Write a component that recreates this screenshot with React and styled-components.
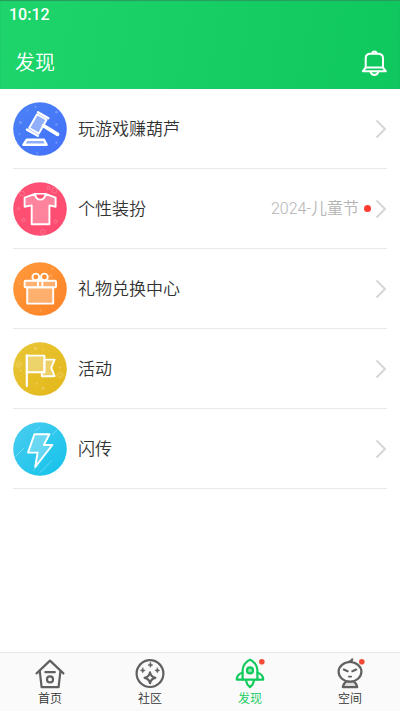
import styled, { createGlobalStyle } from "styled-components";

const GlobalStyle = createGlobalStyle`
    * {
        box-sizing: border-box;
    }
    body {
        margin: 0;
        background: #ffffff;
        font-family: Roboto, "Noto Sans CJK SC", sans-serif;
        font-weight: 350;
    }
`

const Page = styled.div`
    display: flex;
    flex-direction: column;
    min-height: 100vh;
`

const Header = styled.header`
    padding: 0 12px 0 15px;
    color: #ffffff;
    background: linear-gradient(100deg, #1dd56b 0%, #0fc85d 100%);
    box-shadow: inset 0 1px 1px #2c9a5c;
`

const StatusBar = styled.div`
    display: flex;
    align-items: center;
    height: 28px;
    margin-left: -6px;
    font-size: 16px;
    font-weight: 500;
`

const TitleBar = styled.div`
    display: flex;
    align-items: center;
    justify-content: space-between;
    height: 61px;
    padding-top: 8px;
`

const Title = styled.h1`
    margin: 0;
    font-size: 20px;
    line-height: 28px;
    font-weight: 350;
`

const BellButton = styled.button`
    display: flex;
    padding: 0;
    border: none;
    background: none;
    color: inherit;
    cursor: pointer;
`

const List = styled.main`
    flex: 1;
    padding: 0 13px;
`

const Row = styled.a`
    display: flex;
    align-items: center;
    height: 80px;
    border-bottom: 1px solid #e9e9e9;
    color: #333333;
    text-decoration: none;
`

const RowTitle = styled.span`
    flex: 1;
    margin-left: 11px;
    font-size: 17px;
    line-height: 24px;
`

const RowNote = styled.span`
    margin-right: 5px;
    color: #b4b4b4;
    font-size: 16px;
    line-height: 24px;
`

const Dot = styled.span`
    width: 7px;
    height: 7px;
    margin-right: 4px;
    border-radius: 50%;
    background: #ff3b2f;
`

const TabBar = styled.nav`
    position: sticky;
    bottom: 0;
    display: flex;
    height: 59px;
    border-top: 1px solid #e6e6e6;
    background: #fafafa;
`

const Tab = styled.a`
    flex: 1;
    display: flex;
    flex-direction: column;
    align-items: center;
    padding-top: 5px;
    color: ${props => props.$active ? "#0ecb5b" : "#606060"};
    text-decoration: none;
`

const TabLabel = styled.span`
    color: ${props => props.$active ? "#0ecb5b" : "#333333"};
    font-size: 12px;
    line-height: 18px;
`

const Bell = () => (
    <svg width="28" height="28" viewBox="0 0 28 28" fill="none" stroke="currentColor" strokeWidth="2" strokeLinejoin="round" strokeLinecap="round" aria-hidden="true">
        <path d="M5.7 18.6V9.3Q5.7 4.8 10.4 4.8H18Q23 4.8 23 9.3V18.6L25.8 22.2H2.9Z" />
        <path d="M5.7 18.6H23" />
        <path d="M12.3 4.3Q12.5 2.4 14.4 2.4T16.5 4.3" />
        <path d="M10.4 22.6Q11.5 26 14.4 26T18.4 22.6" />
    </svg>
)

const Chevron = () => (
    <svg width="12" height="20" viewBox="0 0 12 20" fill="none" stroke="#d6d6d6" strokeWidth="2" aria-hidden="true">
        <path d="M1.5 1.5L10 10L1.5 18.5" />
    </svg>
)

// round badge, each row passes its own gradient and drawing
const Badge = ({ id, from, to, children }) => (
    <svg width="54" height="54" viewBox="0 0 54 54" fill="none" aria-hidden="true">
        <defs>
            <linearGradient id={id} x1="0" y1="0" x2="1" y2="1">
                <stop offset="0" stopColor={from} />
                <stop offset="1" stopColor={to} />
            </linearGradient>
        </defs>
        <circle cx="27" cy="27" r="26.8" fill={`url(#${id})`} />
        {children}
    </svg>
)

const Gavel = () => (
    <Badge id="gavel" from="#4a82f5" to="#4470fa">
        <g fill="#ffffff" fillOpacity="0.22">
            <circle cx="7.5" cy="20.5" r="1.6" />
            <circle cx="43.5" cy="10" r="1.5" />
            <circle cx="43.5" cy="22.5" r="1.2" />
            <circle cx="22.5" cy="5" r="1" />
            <circle cx="6.5" cy="32" r="1" />
            <circle cx="43.5" cy="40.5" r="1.2" />
            <circle cx="24.5" cy="51" r="1" />
            <circle cx="14.5" cy="8.5" r="0.8" />
        </g>
        <g stroke="#ffffff" strokeWidth="1.9" strokeLinejoin="round">
            <path d="M24 12.2L33.6 17.8L25.8 31.6L16.2 26Z" fill="#ffffff" fillOpacity="0.4" />
            <path d="M25 10.2L35.4 16.2M14 27.6L24.8 33.8" strokeWidth="2.4" strokeLinecap="round" />
            <path d="M30.4 23.6L44.6 32.4" strokeWidth="3.6" strokeLinecap="round" />
            <path d="M13.6 37.8H31L33.6 42.8H10.4Z" fill="#ffffff" fillOpacity="0.4" strokeWidth="2.4" />
        </g>
    </Badge>
)

const Shirt = () => (
    <Badge id="shirt" from="#ff5275" to="#fd4b70">
        <g stroke="#ffffff" strokeOpacity="0.2">
            <circle cx="9" cy="11.5" r="2.4" />
            <circle cx="41.5" cy="8.5" r="2.6" />
            <circle cx="35.5" cy="5.8" r="1.4" />
            <circle cx="30" cy="50" r="2.4" />
            <circle cx="10.5" cy="38" r="1.5" />
            <circle cx="42.5" cy="39.5" r="1.6" />
            <circle cx="5.5" cy="26.5" r="1" />
        </g>
        <path d="M22 11.8L11.6 15.6V24.8L18.7 23.4V42.2H36.4V23.4L42.6 24.8V15.6L32.6 11.8Q31.6 17.6 27.3 17.6T22 11.8Z" fill="#ffffff" fillOpacity="0.3" stroke="#ffffff" strokeWidth="1.9" strokeLinejoin="round" />
        <path d="M21.6 11.8H33" stroke="#ffffff" strokeWidth="1.6" />
    </Badge>
)

const Gift = () => (
    <Badge id="gift" from="#ff9a3d" to="#fd8326">
        <g fill="#ffffff" fillOpacity="0.22">
            <circle cx="39.5" cy="7" r="1" />
            <circle cx="6.5" cy="21.5" r="0.9" />
            <circle cx="27.5" cy="48.5" r="0.9" />
            <circle cx="46" cy="34" r="0.8" />
            <path d="M35.5 14.5L38 12L39.5 15Z" />
        </g>
        <g stroke="#ffffff" strokeWidth="1.9" strokeLinejoin="round">
            <path d="M14.2 25.4H40.2V41.6H14.2Z" fill="#ffffff" fillOpacity="0.3" />
            <rect x="11.6" y="18.8" width="31.4" height="6.6" rx="1" fill="#ffffff" fillOpacity="0.3" />
            <path d="M24.9 18.8V25.4M29.4 18.8V25.4" />
            <circle cx="22.8" cy="15" r="3.4" />
            <circle cx="31.4" cy="15" r="3.4" />
            <path d="M24 18.4L27.1 16.6L30.2 18.4" />
        </g>
    </Badge>
)

const Flag = () => (
    <Badge id="flag" from="#e9c637" to="#e3b719">
        <g fill="#ffffff" fillOpacity="0.28">
            <circle cx="22.5" cy="6.5" r="1.2" />
            <circle cx="30" cy="8" r="0.8" />
            <circle cx="7.8" cy="28.5" r="1" />
            <circle cx="23.8" cy="41.8" r="1" />
            <circle cx="30" cy="46.2" r="1.3" />
            <circle cx="47" cy="25.5" r="0.9" />
        </g>
        <g stroke="#ffffff" strokeOpacity="0.24" strokeDasharray="1.4 1">
            <circle cx="5.5" cy="22.5" r="3.4" />
            <circle cx="47" cy="33" r="3.4" />
            <circle cx="5.5" cy="22.5" r="1.8" strokeDasharray="none" />
            <circle cx="47" cy="33" r="1.8" strokeDasharray="none" />
        </g>
        <g stroke="#ffffff" strokeWidth="1.9" strokeLinejoin="round" strokeLinecap="round">
            <path d="M31.4 17.6H41.6L38.2 25.8L41.6 34.2H28.8V30.4H31.4Z" fill="#ffffff" fillOpacity="0.3" />
            <path d="M13.8 13.6H31.4V30.2H13.8Z" fill="#ffffff" fillOpacity="0.3" />
            <path d="M13.8 13.4V44" strokeWidth="2.2" />
        </g>
    </Badge>
)

const Bolt = () => (
    <Badge id="bolt" from="#4bcdf0" to="#12c2ea">
        <path d="M2.5 34.5L11 26M39 13L44.5 7.5M27 50.5L39 38.5M20 48.5L25 43.5M22 9.5L26.5 5" stroke="#ffffff" strokeOpacity="0.3" />
        <path d="M21.4 12.2H36.4L30.8 23H39.4L22.2 45L24.6 30.6H15Z" fill="#ffffff" fillOpacity="0.28" stroke="#ffffff" strokeWidth="1.9" strokeLinejoin="round" />
    </Badge>
)

const TabIcon = ({ notice, children }) => (
    <svg width="32" height="32" viewBox="0 0 32 32" fill="none" stroke="currentColor" strokeWidth="2.2" strokeLinejoin="round" strokeLinecap="round" aria-hidden="true">
        {children}
        {notice && <circle cx="27.8" cy="3.8" r="2.8" fill="#f24a36" stroke="none" />}
    </svg>
)

const Home = () => (
    <TabIcon>
        <path d="M2.6 15.4L16 2.6L29.4 15.4" />
        <path d="M5.8 13.4L7.6 29.2H24.6L26.4 13.4" />
        <path d="M11.4 14.2H20.8" />
        <circle cx="16" cy="21.4" r="3" />
    </TabIcon>
)

const Community = () => (
    <TabIcon>
        <circle cx="16" cy="15.6" r="13.4" />
        <g fill="currentColor" strokeWidth="0.6">
            <path d="M16.4 4.6Q16.6 6.8 18.8 7Q16.6 7.2 16.4 9.4Q16.2 7.2 14 7Q16.2 6.8 16.4 4.6Z" />
            <path d="M8.8 10Q9 12.2 11.2 12.4Q9 12.6 8.8 14.8Q8.6 12.6 6.4 12.4Q8.6 12.2 8.8 10Z" />
            <path d="M23.3 10Q23.5 12.2 25.7 12.4Q23.5 12.6 23.3 14.8Q23.1 12.6 20.9 12.4Q23.1 12.2 23.3 10Z" />
        </g>
        <path d="M16 14.4Q16.9 18.9 21.4 19.8Q16.9 20.7 16 25.2Q15.1 20.7 10.6 19.8Q15.1 18.9 16 14.4Z" />
    </TabIcon>
)

const Rocket = () => (
    <TabIcon notice>
        <path d="M16 1.8Q13.6 2.6 11 5.6Q8.6 8.6 8.6 12V21.6H23.4V12Q23.4 8.6 21 5.6Q18.4 2.6 16 1.8Z" />
        <path d="M8.4 14.8Q2.8 16.4 2.8 21.6H8.4" />
        <path d="M23.6 14.8Q29.2 16.4 29.2 21.6H23.6" />
        <path d="M12 22.6Q12.6 26.4 16 29.2Q19.4 26.4 20 22.6" />
        <circle cx="16" cy="12.4" r="3" fill="#8de5b0" />
    </TabIcon>
)

const Space = () => (
    <TabIcon notice>
        <path d="M12.4 23.4Q9.2 25.6 8.8 29.2H23.2Q22.8 25.6 19.6 23.4Z" fill="#dddddd" />
        <ellipse cx="16" cy="13.8" rx="11.4" ry="9.8" fill="#fafafa" />
        <path d="M14.8 3.8Q17.6 3.4 18.2 1.4" />
        <path d="M9.8 11.6L13.6 13.2M22.2 11.6L18.4 13.2" />
        <path d="M14.8 18.6H17.2" strokeWidth="1.8" />
    </TabIcon>
)

const rows = [
    { title: "玩游戏赚葫芦", Icon: Gavel },
    { title: "个性装扮", Icon: Shirt, note: "2024-儿童节" },
    { title: "礼物兑换中心", Icon: Gift },
    { title: "活动", Icon: Flag },
    { title: "闪传", Icon: Bolt },
]

const tabs = [
    { label: "首页", Icon: Home },
    { label: "社区", Icon: Community },
    { label: "发现", Icon: Rocket, active: true },
    { label: "空间", Icon: Space },
]

const App = () => {
    return (
        <Page>
            <GlobalStyle />
            <Header>
                <StatusBar>10:12</StatusBar>
                <TitleBar>
                    <Title>发现</Title>
                    <BellButton type="button" aria-label="通知">
                        <Bell />
                    </BellButton>
                </TitleBar>
            </Header>
            <List>
                {rows.map(({ title, Icon, note }) => (
                    <Row key={title} href="#">
                        <Icon />
                        <RowTitle>{title}</RowTitle>
                        {note && <RowNote>{note}</RowNote>}
                        {note && <Dot />}
                        <Chevron />
                    </Row>
                ))}
            </List>
            <TabBar>
                {tabs.map(({ label, Icon, active }) => (
                    <Tab key={label} href="#" $active={active}>
                        <Icon />
                        <TabLabel $active={active}>{label}</TabLabel>
                    </Tab>
                ))}
            </TabBar>
        </Page>
    )
}

export default App;
